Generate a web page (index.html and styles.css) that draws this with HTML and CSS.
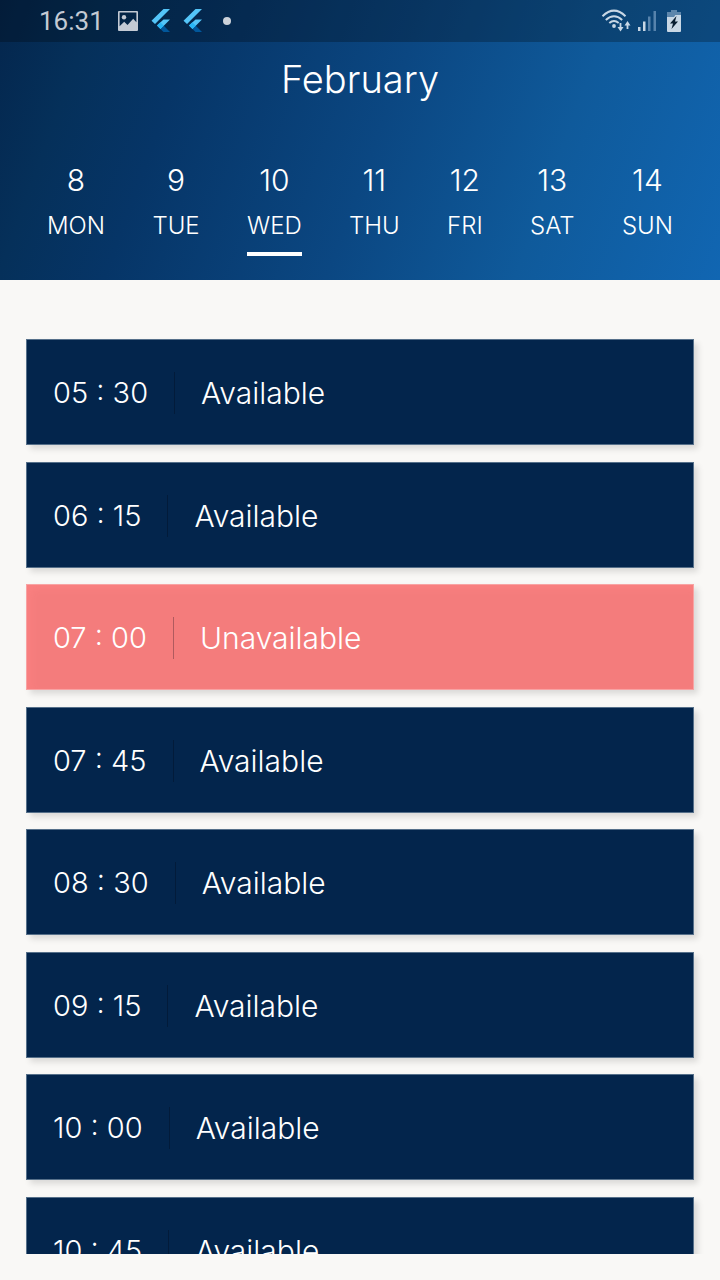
FILE: index.html
```html
<!DOCTYPE html>
<html lang="en">
<head>
<meta charset="utf-8">
<meta name="viewport" content="width=device-width, initial-scale=1">
<title>February</title>
<link rel="stylesheet" href="styles.css">
</head>
<body>
<div class="app">
  <header class="header">
    <div class="status">
      <span class="clock">16:31</span>
      <svg class="icon-image" width="22" height="22" viewBox="0 0 22 22" aria-hidden="true"><path fill="#c3cad4" fill-rule="evenodd" d="M2 1h18q1 0 1 1v18q0 1-1 1H2q-1 0-1-1V2q0-1 1-1zm.6 1.600v13.600l4.600-4.400 3.300 3.200 5.700-6.200 3.200 3.400V2.600z"/><circle cx="7" cy="7.200" r="2.200" fill="#c3cad4"/></svg>
      <svg class="icon-flutter" width="20" height="24" viewBox="0 0 20 24" aria-hidden="true"><path fill="#54c5f8" d="M12.500 0H19L4 15 .5 11.700zM12.500 10.500H19L9.500 20 6 16.500z"/><path fill="#01579b" d="M9.500 20l3.300-3.300L19 23h-6.500z"/><path fill="#29b6f6" d="M6 16.500l3.300-3.300 3.500 3.500L9.500 20z"/></svg>
      <svg class="icon-flutter" width="20" height="24" viewBox="0 0 20 24" aria-hidden="true"><path fill="#54c5f8" d="M12.500 0H19L4 15 .5 11.700zM12.500 10.500H19L9.500 20 6 16.500z"/><path fill="#01579b" d="M9.500 20l3.300-3.300L19 23h-6.500z"/><path fill="#29b6f6" d="M6 16.500l3.300-3.300 3.500 3.500L9.500 20z"/></svg>
      <span class="dot"></span>
      <svg class="icon-wifi" width="30" height="24" viewBox="0 0 30 24" aria-hidden="true"><g fill="none" stroke="#c8d7e5" stroke-width="2"><path d="M1.500 7.300Q13 -4 24.500 7.300M4.800 11Q13 3.500 21.200 11M8.300 14Q13 10 17.700 14"/><path d="M19.500 14v6M26.500 20v-6" stroke-width="1.800"/></g><circle cx="13" cy="17" r="1.900" fill="#c8d7e5"/><path fill="#c8d7e5" d="M16.500 18h6L19.500 22.500zM23.500 16.500h6l-3-4.500z"/></svg>
      <svg class="icon-signal" width="20" height="22" viewBox="0 0 20 22" aria-hidden="true"><path fill="#c8d7e5" d="M1 17h2.500v4H1zM6 11.500h2.500V21H6z"/><path fill="#5783ac" d="M11 6.500h2.500V21H11zM16.500 1H19v20h-2.500z"/></svg>
      <svg class="icon-battery" width="16" height="24" viewBox="0 0 16 24" aria-hidden="true"><path fill="#5d86ac" d="M5 1h6v2h4v4H1V3h4z"/><path fill="#c8d7e5" d="M1 6h14v16q0 1-1 1H2q-1 0-1-1z"/><path fill="#5d86ac" d="M1 5h9L8 8H1z"/><path fill="#071c30" d="M10.500 7L4 14.500h3L5.500 20l6.500-7.500H9z"/></svg>
    </div>
    <h1 class="month">February</h1>
    <nav class="week" aria-label="Days">
      <button class="day"><span class="date">8</span><span class="name">MON</span></button>
      <button class="day"><span class="date">9</span><span class="name">TUE</span></button>
      <button class="day current" aria-current="date"><span class="date">10</span><span class="name">WED</span></button>
      <button class="day"><span class="date">11</span><span class="name">THU</span></button>
      <button class="day"><span class="date">12</span><span class="name">FRI</span></button>
      <button class="day"><span class="date">13</span><span class="name">SAT</span></button>
      <button class="day"><span class="date">14</span><span class="name">SUN</span></button>
    </nav>
  </header>
  <main class="slots">
    <button class="slot"><span class="time">05 : 30</span><span class="state">Available</span></button>
    <button class="slot"><span class="time">06 : 15</span><span class="state">Available</span></button>
    <button class="slot taken"><span class="time">07 : 00</span><span class="state">Unavailable</span></button>
    <button class="slot"><span class="time">07 : 45</span><span class="state">Available</span></button>
    <button class="slot"><span class="time">08 : 30</span><span class="state">Available</span></button>
    <button class="slot"><span class="time">09 : 15</span><span class="state">Available</span></button>
    <button class="slot"><span class="time">10 : 00</span><span class="state">Available</span></button>
    <button class="slot"><span class="time">10 : 45</span><span class="state">Available</span></button>
  </main>
</div>
</body>
</html>
```
FILE: styles.css
```css
* { box-sizing: border-box; }
body { margin: 0; background: #f9f8f6; font-family: Inter, sans-serif; font-weight: 300; color: #fff; }
button { margin: 0; border: 0; background: none; font: inherit; color: inherit; cursor: pointer; }
.app { display: flex; flex-direction: column; height: 100vh; padding-bottom: 26px; }
.header { flex: none; background: linear-gradient(110deg, #04264d 0%, #05305a 12%, #063567 25%, #0b4782 52%, #0f5a9b 75%, #1166b2 100%); }
.status { display: flex; align-items: center; height: 42px; padding: 0 38px 0 39px; background: rgba(0, 0, 0, 0.25); }
.clock { font: 400 26px/44px Roboto, sans-serif; color: #c3cad4; }
.icon-image { margin-left: 13px; }
.icon-flutter { margin-left: 12px; }
.dot { width: 8px; height: 8px; margin-left: 20px; border-radius: 50%; background: #ccd2da; }
.icon-wifi { margin-left: auto; }
.icon-signal { margin-left: 6px; }
.icon-battery { margin-left: 9px; }
.month { margin: 0; padding-top: 12px; font-size: 38px; line-height: 50px; font-weight: inherit; text-align: center; }
.week { display: flex; justify-content: space-between; padding: 54px 47px 24px; }
.day { display: flex; flex-direction: column; align-items: center; padding: 0 0 8px; border-bottom: 4px solid transparent; }
.current { border-bottom-color: #fff; }
.date { font-size: 30px; line-height: 44px; }
.name { padding-top: 6px; font-size: 24px; line-height: 36px; }
.slots { flex: 1; min-height: 0; overflow: hidden; padding: 59px 26px 0; }
.slot { display: flex; align-items: center; width: 100%; height: 106px; margin-bottom: 17px; padding: 2px 26px 0; border: 1px solid #56708a; background: #03254c; box-shadow: 4px 4px 6px rgba(0, 0, 0, 0.12); font-size: 30px; line-height: 42px; text-align: left; }
.slot:nth-child(even) { margin-bottom: 16px; }
.time { padding-right: 26px; border-right: 1px solid #021b3a; font-size: 29px; }
.state { padding-left: 26px; }
.taken { border-color: #f8a3a3; background: #f47c7c; box-shadow: 4px 4px 6px rgba(0, 0, 0, 0.12), inset 4px 4px 8px #fa8080; }
.taken .time { border-right-color: #b05a5e; }
```
